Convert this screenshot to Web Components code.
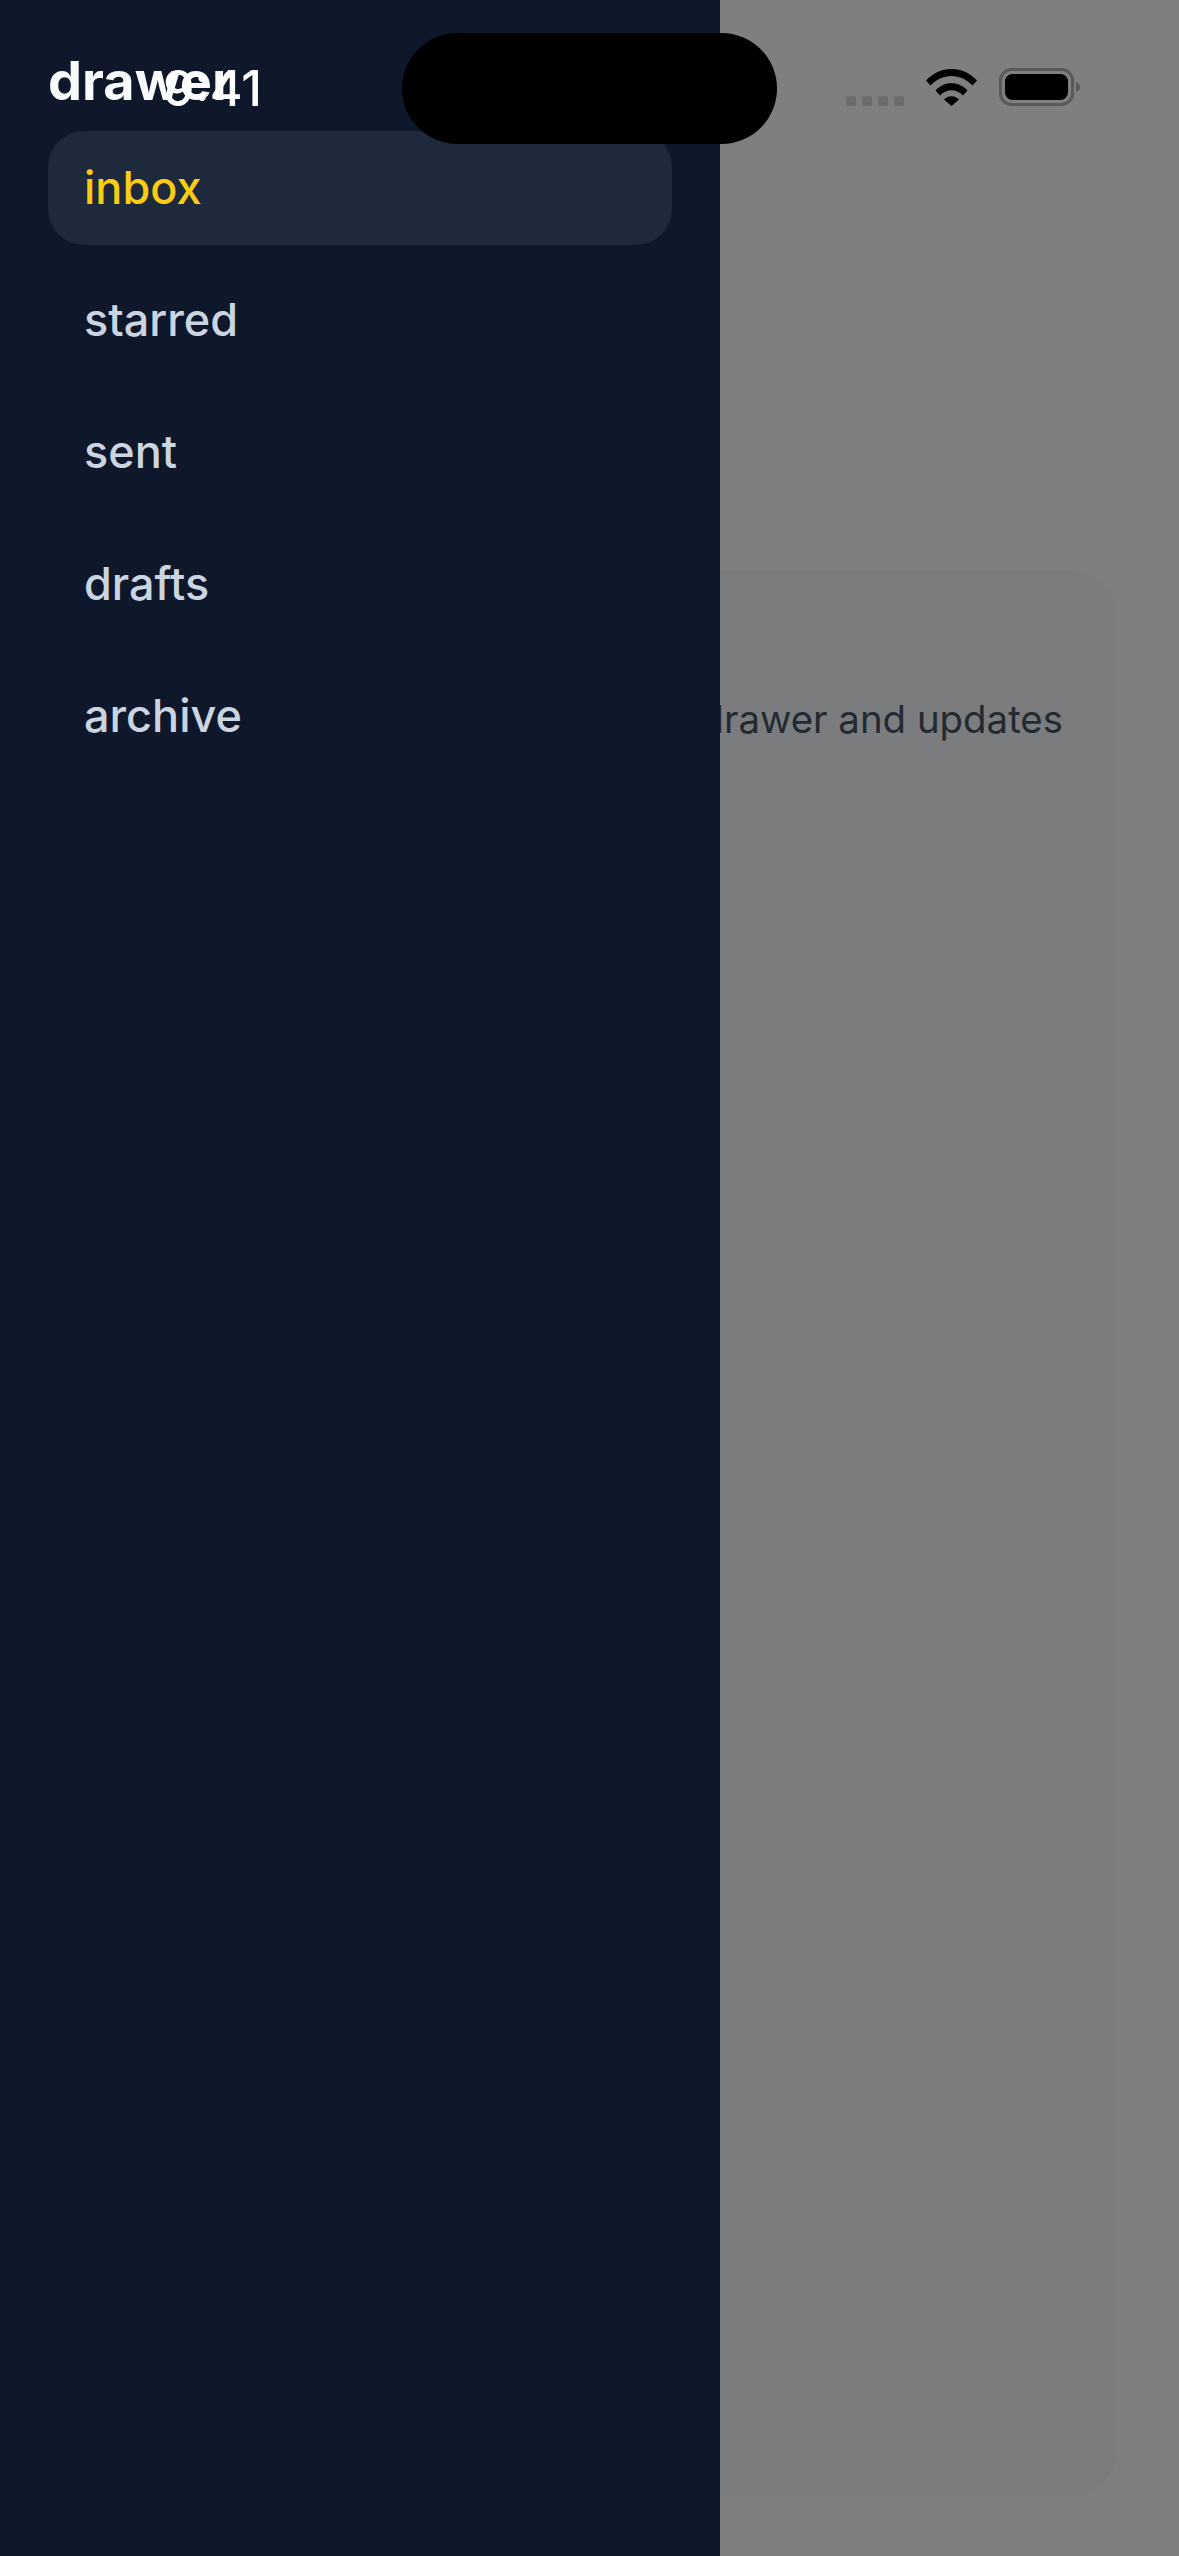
<!DOCTYPE html>
<html>
<head>
<meta charset="utf-8">
<title>drawer</title>
<style>
  html, body { margin: 0; padding: 0; height: 100%; background: #fff; }
  body { font-family: Inter, "Noto Sans", sans-serif; }
</style>
</head>
<body>
<app-screen>
  <content-card>drawer and updates</content-card>
  <side-drawer heading="drawer">
    <drawer-item active>inbox</drawer-item>
    <drawer-item>starred</drawer-item>
    <drawer-item>sent</drawer-item>
    <drawer-item>drafts</drawer-item>
    <drawer-item>archive</drawer-item>
  </side-drawer>
  <status-bar time="9:41"></status-bar>
</app-screen>

<script>
class AppScreen extends HTMLElement {
    constructor() {
        super();
        this.attachShadow({mode: "open"});
        this.shadowRoot.innerHTML = `<style>
            :host {
                display: block;
                position: relative;
                width: 1179px;
                height: 2556px;
                overflow: hidden;
                background: #fff;
            }
            main {
                box-sizing: border-box;
                height: 100%;
                display: flex;
                flex-direction: column;
                padding: 571px 61px 60px 60px;
            }
            .scrim {
                position: absolute;
                inset: 0;
                background: rgba(0, 0, 0, .5);
            }
        </style>
        <main><slot></slot></main>
        <div class="scrim"></div>
        <slot name="top"></slot>`;
    }
    connectedCallback() {
        // drawer and status bar lie over the scrim
        this.querySelectorAll("side-drawer, status-bar").forEach(el => el.slot = "top");
    }
}

class ContentCard extends HTMLElement {
    constructor() {
        super();
        this.attachShadow({mode: "open"});
        this.shadowRoot.innerHTML = `<style>
            :host {
                display: block;
                flex: 1;
                box-sizing: border-box;
                background: #f6f8fa;
                border-radius: 48px;
                padding: 121px 55px 0 48px;
                color: #475569;
                font-size: 38.4px;
                line-height: 54px;
                text-align: right;
            }
        </style>
        <slot></slot>`;
    }
}

class SideDrawer extends HTMLElement {
    constructor() {
        super();
        this.attachShadow({mode: "open"});
        this.shadowRoot.innerHTML = `<style>
            :host {
                display: block;
                position: absolute;
                left: 0;
                top: 0;
                bottom: 0;
                width: 720px;
                box-sizing: border-box;
                background: #0f172a;
                padding: 48px;
            }
            h1 {
                margin: 0 0 30px;
                height: 53px;
                font-size: 54px;
                line-height: 66px;
                font-weight: 700;
                color: #f8fafc;
            }
            nav {
                display: flex;
                flex-direction: column;
                gap: 18px;
            }
        </style>
        <h1></h1>
        <nav><slot></slot></nav>`;
    }
    connectedCallback() {
        this.shadowRoot.querySelector("h1").textContent = this.getAttribute("heading");
    }
}

class DrawerItem extends HTMLElement {
    constructor() {
        super();
        this.attachShadow({mode: "open"});
        this.shadowRoot.innerHTML = `<style>
            :host {
                display: flex;
                align-items: center;
                height: 114px;
                box-sizing: border-box;
                padding: 0 36px 1px;
                border-radius: 36px;
                color: #cbd5e1;
                font-size: 45px;
                font-weight: 500;
            }
            :host([active]) {
                background: #1e293b;
                color: #facc15;
            }
        </style>
        <slot></slot>`;
    }
}

class StatusBar extends HTMLElement {
    constructor() {
        super();
        this.attachShadow({mode: "open"});
        this.shadowRoot.innerHTML = `<style>
            :host {
                display: flex;
                position: absolute;
                left: 0;
                top: 0;
                right: 0;
                height: 144px;
                box-sizing: border-box;
                align-items: flex-start;
                font-family: Inter, sans-serif;
            }
            .time {
                width: 402px;
                box-sizing: border-box;
                padding: 58px 0 0 163px;
                color: #fff;
                font-size: 50px;
                line-height: 60px;
                font-weight: 500;
            }
            .island {
                width: 375px;
                height: 111px;
                margin-top: 33px;
                border-radius: 56px;
                background: #000;
            }
            .icons {
                display: flex;
                align-items: flex-end;
                padding: 68px 0 0 69px;
            }
            .dots {
                display: flex;
                gap: 6px;
            }
            .dots i {
                width: 10px;
                height: 10px;
                border-radius: 3px;
                background: #6b6b6b;
            }
            .wifi { display: block; margin-left: 22px; }
            .battery { display: block; margin-left: 22px; }
        </style>
        <div class="time"></div>
        <div class="island"></div>
        <div class="icons">
            <div class="dots"><i></i><i></i><i></i><i></i></div>
            <svg class="wifi" width="51" height="37" viewBox="0 0 51 37">
                <path d="M0 11.5C6.5 4.4 15.5 0 25.5 0S44.500 4.400 51 11.500L46.500 16.500C41 10.600 33.600 7 25.500 7S10 10.600 4.500 16.500Z"/>
                <path d="M9.500 21.500C13.600 17 19.200 14.300 25.500 14.300S37.400 17 41.500 21.500L37 26.500C34 23.300 30 21.300 25.500 21.300S17 23.300 14 26.500Z"/>
                <path d="M18 30.500C20 28.400 22.600 27.200 25.500 27.200S31 28.400 33 30.500L25.500 37Z"/>
            </svg>
            <svg class="battery" width="82" height="38" viewBox="0 0 82 38">
                <rect x="1.500" y="1.500" width="72" height="35" rx="11" fill="none" stroke="#595959" stroke-width="3"/>
                <rect x="6" y="6" width="63" height="26" rx="7.500" fill="#000"/>
                <path d="M77 14C79.500 15 81 16.800 81 19S79.500 23 77 24Z" fill="#595959"/>
            </svg>
        </div>`;
    }
    connectedCallback() {
        this.shadowRoot.querySelector(".time").textContent = this.getAttribute("time");
    }
}

customElements.define("app-screen", AppScreen);
customElements.define("content-card", ContentCard);
customElements.define("side-drawer", SideDrawer);
customElements.define("drawer-item", DrawerItem);
customElements.define("status-bar", StatusBar);
</script>
</body>
</html>
